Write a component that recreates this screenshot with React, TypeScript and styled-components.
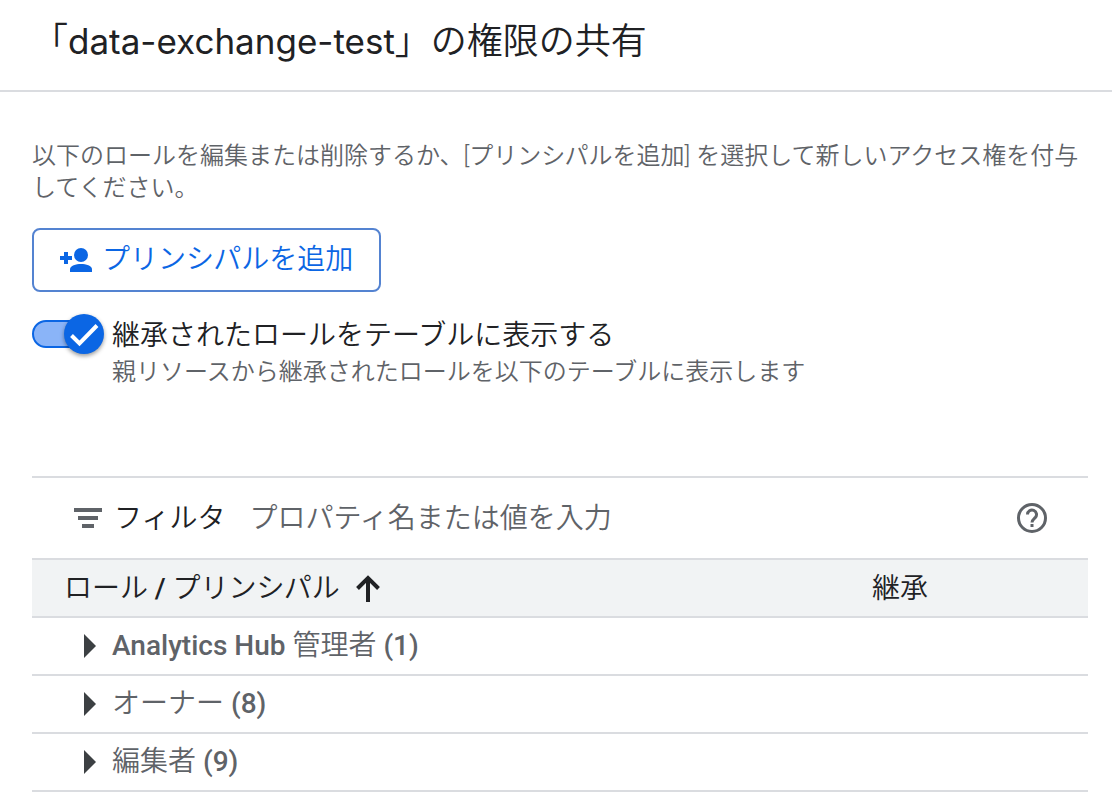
import React, { useState } from "react";
import styled, { createGlobalStyle } from "styled-components";

const colors = {
  text: "#202124",
  muted: "#5f6368",
  line: "#dadce0",
  blue: "#0b66e4",
  head: "#f1f3f4",
};

const GlobalStyle = createGlobalStyle`
  *, *::before, *::after { box-sizing: border-box; }
  body {
    margin: 0;
    background: #fff;
    color: ${colors.text};
    font-family: Roboto, "Noto Sans CJK JP", sans-serif;
    font-size: 28px;
    font-weight: 350;
  }
  button, input { font: inherit; color: inherit; }
`;

const Header = styled.header`
  padding: 18px 32px 24px;
  border-bottom: 2px solid ${colors.line};
`;

const Title = styled.h1`
  margin: 0;
  font-size: 36px;
  line-height: 48px;
  font-weight: 350;
`;

const TitleName = styled.span`
  font-family: Inter, sans-serif;
  font-size: 35px;
  font-weight: 400;
  line-height: 1;
`;

const Main = styled.main`
  padding: 48px 24px 16px 32px;
`;

const Description = styled.p`
  margin: 0 0 24px;
  font-size: 24px;
  line-height: 32px;
  color: ${colors.muted};
`;

const AddButton = styled.button`
  display: flex;
  align-items: center;
  gap: 8px;
  height: 64px;
  padding: 0 26px 0 24px;
  border: 2px solid #5483d1;
  border-radius: 8px;
  background: #fff;
  color: ${colors.blue};
  cursor: pointer;
`;

const ButtonText = styled.span`
  padding-bottom: 6px;
`;

const ToggleRow = styled.div`
  display: flex;
  align-items: flex-start;
  gap: 8px;
  margin: 20px 0 88px;
`;

const Switch = styled.span`
  position: relative;
  display: flex;
  align-items: center;
  flex: none;
  width: 72px;
  height: 44px;
`;

const SwitchInput = styled.input`
  appearance: none;
  width: 64px;
  height: 28px;
  margin: 0;
  border: 2px solid ${colors.blue};
  border-radius: 14px;
  background: #8ab4f8;
  cursor: pointer;
  &:not(:checked) { background: ${colors.line}; border-color: ${colors.muted}; }
`;

const Knob = styled.span<{ $on: boolean }>`
  position: absolute;
  top: 2px;
  left: ${(p) => (p.$on ? "32px" : "0")};
  width: 40px;
  height: 40px;
  border-radius: 50%;
  background: ${(p) => (p.$on ? colors.blue : "#fff")};
  box-shadow: 0 2px 4px rgba(0, 0, 0, 0.4);
  pointer-events: none;
`;

const ToggleText = styled.div`
  display: flex;
  flex-direction: column;
  padding-top: 4px;
`;

const ToggleLabel = styled.label`
  line-height: 40px;
`;

const Hint = styled.span`
  font-size: 24px;
  line-height: 32px;
  color: ${colors.muted};
`;

const FilterBar = styled.div`
  display: flex;
  align-items: center;
  height: 82px;
  padding: 0 36px;
  border-top: 2px solid ${colors.line};
`;

const FilterLabel = styled.label`
  display: flex;
  align-items: center;
  gap: 6px;
`;

const FilterInput = styled.input`
  flex: 1;
  min-width: 0;
  margin-left: 24px;
  padding: 0;
  border: 0;
  outline: 0;
  background: none;
  &::placeholder { color: ${colors.muted}; opacity: 1; }
`;

const IconButton = styled.button`
  display: flex;
  padding: 0;
  border: 0;
  background: none;
  color: ${colors.muted};
  cursor: pointer;
`;

const Table = styled.table`
  width: 100%;
  border-spacing: 0;
  table-layout: fixed;
`;

const HeadCell = styled.th<{ $narrow?: boolean }>`
  width: ${(p) => (p.$narrow ? "248px" : "auto")};
  height: 60px;
  padding: 0 32px;
  border-top: 2px solid ${colors.line};
  border-bottom: 2px solid ${colors.line};
  background: ${colors.head};
  text-align: left;
  font-weight: 350;
`;

const HeadText = styled.div`
  padding-bottom: 4px;
`;

const SortButton = styled(IconButton)`
  align-items: center;
  gap: 10px;
  color: ${colors.text};
`;

const Cell = styled.td`
  height: 58px;
  padding: 0 48px;
  border-bottom: 2px solid ${colors.line};
  color: ${colors.muted};
`;

const RowButton = styled(IconButton)`
  align-items: center;
  gap: 12px;
  white-space: pre;
`;

const Latin = styled.span`
  font-weight: 500;
`;

const roles = [
  { latin: "Analytics Hub ", name: "管理者", count: 1 },
  { latin: "", name: "オーナー", count: 8 },
  { latin: "", name: "編集者", count: 9 },
];

export default function App() {
  const [inherited, setInherited] = useState(true);
  return (
    <div lang="ja">
      <GlobalStyle />
      <Header>
        <Title>
          「<TitleName>data-exchange-test</TitleName>」の権限の共有
        </Title>
      </Header>
      <Main>
        <Description>
          以下のロールを編集または削除するか、[プリンシパルを追加] を選択して新しいアクセス権を付与してください。
        </Description>
        <AddButton type="button">
          <svg width="36" height="36" viewBox="0 0 36 36" fill="currentColor" aria-hidden="true">
            <circle cx="23" cy="13" r="7" />
            <path d="M12 30v-2.500c0-4 6-5.500 11-5.500s11 1.500 11 5.500V30z" />
            <path d="M6 10h4v4h4v4h-4v4H6v-4H2v-4h4z" />
          </svg>
          <ButtonText>プリンシパルを追加</ButtonText>
        </AddButton>
        <ToggleRow>
          <Switch>
            <SwitchInput
              id="inherited"
              type="checkbox"
              role="switch"
              checked={inherited}
              onChange={(e) => setInherited(e.target.checked)}
              aria-describedby="inherited-hint"
            />
            <Knob $on={inherited}>
              {inherited && (
                <svg width="40" height="40" viewBox="0 0 40 40" fill="none" stroke="#fff" strokeWidth="4" aria-hidden="true">
                  <path d="M7.500 21.500l8 8L33 11.500" />
                </svg>
              )}
            </Knob>
          </Switch>
          <ToggleText>
            <ToggleLabel htmlFor="inherited">継承されたロールをテーブルに表示する</ToggleLabel>
            <Hint id="inherited-hint">親リソースから継承されたロールを以下のテーブルに表示します</Hint>
          </ToggleText>
        </ToggleRow>
        <FilterBar>
          <FilterLabel htmlFor="filter">
            <svg width="40" height="40" viewBox="0 0 40 40" fill={colors.muted} aria-hidden="true">
              <path d="M6 10h28v4H6zM10 18h20v4H10zM14 26h12v4H14z" />
            </svg>
            <HeadText as="span">フィルタ</HeadText>
          </FilterLabel>
          <FilterInput id="filter" placeholder="プロパティ名または値を入力" />
          <IconButton type="button" aria-label="ヘルプ">
            <svg width="40" height="40" viewBox="0 0 40 40" fill="none" stroke="currentColor" strokeWidth="3" aria-hidden="true">
              <circle cx="20" cy="20" r="13.500" />
              <path d="M15.500 16.500a4.500 4.500 0 1 1 7.700 3.200c-1.700 1.600-3.200 2.200-3.200 4.800M20 26v3" />
            </svg>
          </IconButton>
        </FilterBar>
        <Table>
          <thead>
            <tr>
              <HeadCell scope="col" aria-sort="ascending">
                <SortButton type="button">
                  <HeadText as="span">
                    ロール <Latin>/</Latin> プリンシパル
                  </HeadText>
                  <svg width="36" height="36" viewBox="0 0 36 36" fill="none" stroke="currentColor" strokeWidth="4" aria-hidden="true">
                    <path d="M18 32V8M7.500 18.500L18 8l10.500 10.500" />
                  </svg>
                </SortButton>
              </HeadCell>
              <HeadCell scope="col" $narrow>
                <HeadText>継承</HeadText>
              </HeadCell>
            </tr>
          </thead>
          <tbody>
            {roles.map((role) => (
              <tr key={role.name}>
                <Cell>
                  <RowButton type="button" aria-expanded={false}>
                    <svg width="20" height="28" viewBox="0 0 20 28" fill="#3c4043" aria-hidden="true">
                      <path d="M4 2l12 12L4 26z" />
                    </svg>
                    <ButtonText>
                      <Latin>{role.latin}</Latin>
                      {role.name}
                      <Latin> ({role.count})</Latin>
                    </ButtonText>
                  </RowButton>
                </Cell>
                <Cell />
              </tr>
            ))}
          </tbody>
        </Table>
      </Main>
    </div>
  );
}
